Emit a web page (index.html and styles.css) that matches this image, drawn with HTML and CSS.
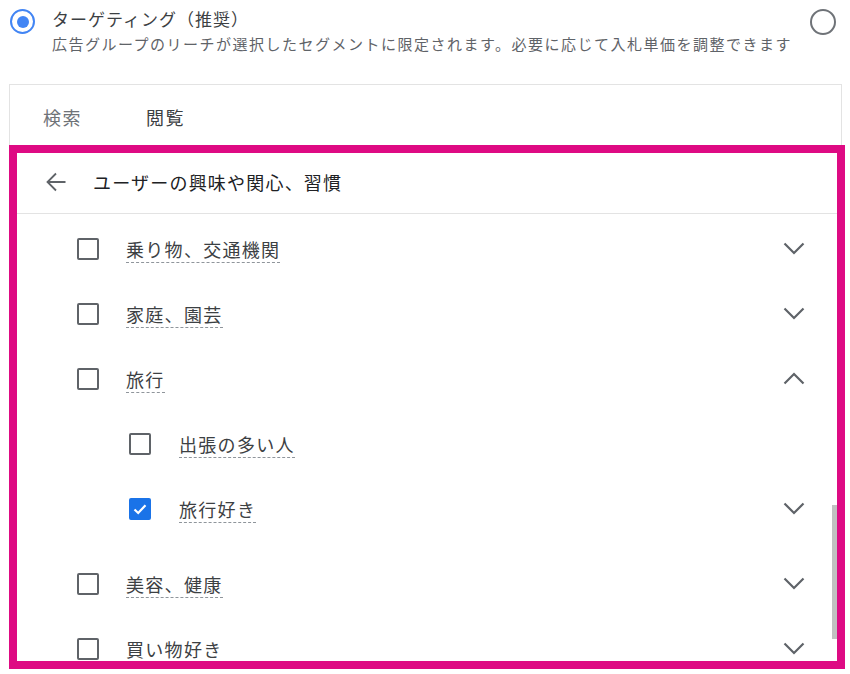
FILE: index.html
```html
<!DOCTYPE html>
<html lang="ja">
<head>
<meta charset="utf-8">
<link rel="stylesheet" href="styles.css">
</head>
<body>
<div class="top">
  <div class="opt">
    <span class="radio on"><span class="dot"></span></span>
    <div class="opt-text">
      <div class="title">ターゲティング（推奨）</div>
      <div class="desc">広告グループのリーチが選択したセグメントに限定されます。必要に応じて入札単価を調整できます</div>
    </div>
  </div>
  <span class="radio off"></span>
</div>
<div class="panel">
  <div class="tabs">
    <span class="tab">検索</span>
    <span class="tab active">閲覧</span>
  </div>
  <div class="frame">
    <div class="head">
      <svg class="back" width="20" height="20" viewBox="0 0 20 20"><path d="M19.5 10H1.5M10 1.5L1.5 10 10 18.5" fill="none" stroke="#5f6368" stroke-width="1.8"/></svg>
      <span class="head-text">ユーザーの興味や関心、習慣</span>
    </div>
    <div class="list">
      <div class="row">
        <span class="cb"></span><span class="label">乗り物、交通機関</span>
        <svg class="chev" width="22" height="13" viewBox="0 0 22 13"><path d="M1.5 1.5L11 11 20.5 1.5" fill="none" stroke="#5f6368" stroke-width="2.2"/></svg>
      </div>
      <div class="row">
        <span class="cb"></span><span class="label">家庭、園芸</span>
        <svg class="chev" width="22" height="13" viewBox="0 0 22 13"><path d="M1.5 1.5L11 11 20.5 1.5" fill="none" stroke="#5f6368" stroke-width="2.2"/></svg>
      </div>
      <div class="row">
        <span class="cb"></span><span class="label">旅行</span>
        <svg class="chev" width="22" height="13" viewBox="0 0 22 13"><path d="M1.5 11.5L11 2 20.5 11.5" fill="none" stroke="#5f6368" stroke-width="2.2"/></svg>
      </div>
      <div class="children">
        <div class="row child">
          <span class="cb"></span><span class="label">出張の多い人</span>
        </div>
        <div class="row child">
          <span class="cb checked"><svg width="16" height="16" viewBox="0 0 16 16"><path d="M2.5 8.5L6.2 12 13.5 4.2" fill="none" stroke="#fff" stroke-width="2.2"/></svg></span><span class="label">旅行好き</span>
          <svg class="chev" width="22" height="13" viewBox="0 0 22 13"><path d="M1.5 1.5L11 11 20.5 1.5" fill="none" stroke="#5f6368" stroke-width="2.2"/></svg>
        </div>
      </div>
      <div class="row">
        <span class="cb"></span><span class="label">美容、健康</span>
        <svg class="chev" width="22" height="13" viewBox="0 0 22 13"><path d="M1.5 1.5L11 11 20.5 1.5" fill="none" stroke="#5f6368" stroke-width="2.2"/></svg>
      </div>
      <div class="row">
        <span class="cb"></span><span class="label">買い物好き</span>
        <svg class="chev" width="22" height="13" viewBox="0 0 22 13"><path d="M1.5 1.5L11 11 20.5 1.5" fill="none" stroke="#5f6368" stroke-width="2.2"/></svg>
      </div>
      <div class="scrollbar"></div>
    </div>
  </div>
</div>
</body>
</html>
```
FILE: styles.css
```css
* { box-sizing: border-box; }
html, body { margin: 0; padding: 0; background: #fff; }
body {
  width: 850px;
  height: 674px;
  overflow: hidden;
  font-family: "Noto Sans CJK JP", "Noto Sans", sans-serif;
  color: #3c4043;
}
.top {
  height: 84px;
  padding: 7px 14px 0 10px;
  display: flex;
  justify-content: space-between;
  align-items: flex-start;
}
.opt {
  display: flex;
  align-items: flex-start;
}
.radio {
  width: 25px;
  height: 25px;
  border-radius: 50%;
  margin-top: 2px;
  flex: none;
  display: flex;
  align-items: center;
  justify-content: center;
}
.radio.on { border: 2.5px solid #4285f4; }
.radio.on .dot {
  width: 12px;
  height: 12px;
  border-radius: 50%;
  background: #4285f4;
}
.radio.off {
  border: 2px solid #6f7378;
  width: 26px;
  height: 26px;
}
.opt-text { margin-left: 17px; }
.title {
  font-size: 17px;
  letter-spacing: 1px;
  line-height: 24px;
  color: #3c4043;
}
.desc {
  font-size: 15px;
  letter-spacing: 1.5px;
  line-height: 22px;
  margin-top: 2px;
  color: #5f6368;
  white-space: nowrap;
}
.panel {
  margin-left: 9px;
  width: 833px;
  border-top: 1px solid #e3e3e3;
  border-left: 1px solid #e3e3e3;
  border-right: 1px solid #e3e3e3;
}
.tabs {
  height: 60px;
  display: flex;
  align-items: center;
  padding-left: 33px;
  padding-top: 3px;
}
.tab {
  font-size: 18px;
  letter-spacing: 1.5px;
  color: #6f7378;
  margin-right: 64px;
}
.tab.active { color: #3c4043; }
.frame {
  margin-left: -1px;
  width: 836px;
  height: 524px;
  border: 8px solid #de0a83;
  display: flex;
  flex-direction: column;
  background: #fff;
}
.head {
  height: 61px;
  flex: none;
  border-bottom: 1px solid #e3e3e3;
  display: flex;
  align-items: center;
  padding-left: 29px;
  padding-bottom: 3px;
}
.back { flex: none; }
.head-text {
  margin-left: 27px;
  font-size: 18px;
  letter-spacing: 1.2px;
  color: #202124;
}
.list {
  position: relative;
  flex: 1;
  overflow: hidden;
  padding-top: 2px;
}
.row {
  height: 65px;
  display: flex;
  align-items: center;
  padding-left: 60px;
  padding-right: 32px;
}
.row.child { padding-left: 112px; }
.children { padding-bottom: 10px; }
.cb {
  width: 22px;
  height: 22px;
  border: 2.5px solid #5f6368;
  border-radius: 2px;
  flex: none;
  margin-right: 27px;
  display: flex;
  align-items: center;
  justify-content: center;
}
.row.child .cb { margin-right: 28px; }
.cb.checked {
  background: #1a73e8;
  border-color: #1a73e8;
}
.label {
  font-size: 18px;
  letter-spacing: 1.3px;
  line-height: 22px;
  color: #3c4043;
  border-bottom: 1px dashed #8f959b;
  padding-bottom: 2px;
  margin-top: 3px;
}
.chev {
  margin-left: auto;
  flex: none;
}
.scrollbar {
  position: absolute;
  right: 0;
  top: 291px;
  width: 5px;
  height: 134px;
  background: #c1c1c1;
}
```
